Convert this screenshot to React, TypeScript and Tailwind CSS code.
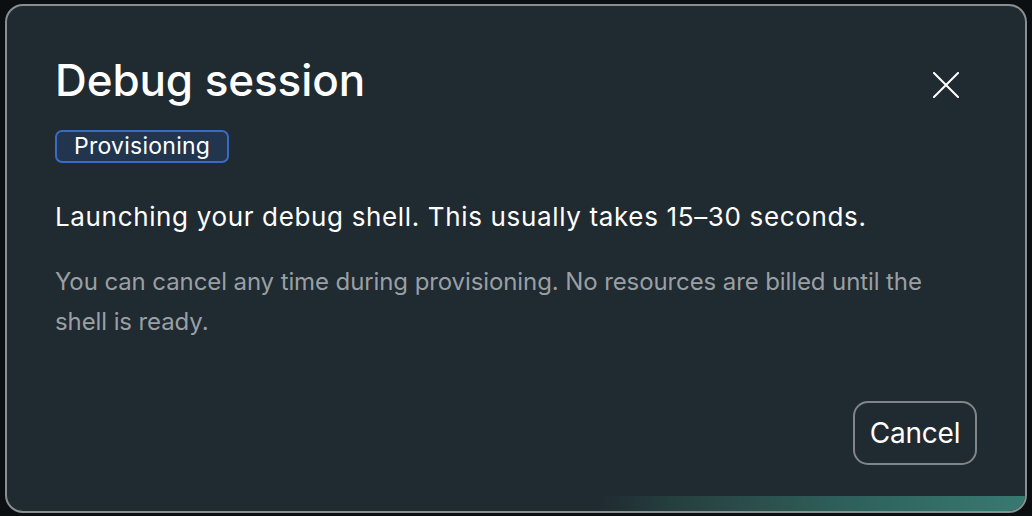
import React from 'react';

const CloseIcon = () => (
  <svg width="26" height="26" viewBox="0 0 26 26" fill="none" stroke="currentColor" strokeWidth="2" strokeLinecap="square">
    <path d="M1 1 L25 25 M25 1 L1 25" />
  </svg>
);

const App: React.FC = () => {
  return (
    <div
      className="w-full h-[516px] bg-[#0b0f11] pt-[4px] pl-[5px] pr-[5px] pb-[3px]"
      style={{ fontFamily: 'Inter, "Noto Sans", sans-serif' }}
    >
      {/* Dialog */}
      <div className="h-full w-full flex flex-col rounded-[18px] border-2 border-[#8a8e91] bg-[#1f2a31] overflow-hidden">
        <div className="flex-1 flex flex-col px-12 pt-[52px] pb-[31px]">
          <div className="flex items-start justify-between">
            <h2 className="text-[44px] leading-[56px] font-medium text-white tracking-[-0.1px] -mt-[6px]">
              Debug session
            </h2>
            <button className="mr-[13px] mt-[9px] w-[36px] h-[36px] flex items-center justify-center text-white">
              <CloseIcon />
            </button>
          </div>

          <div className="mt-[22px] flex">
            <span className="flex items-center h-[33px] px-[17px] rounded-[7px] border-2 border-[#3a6bc0] bg-[#21354f] text-white text-[23px] tracking-[0.25px] leading-none">
              Provisioning
            </span>
          </div>

          <p className="mt-[38px] text-white text-[26px] tracking-[0.65px] leading-[32px]">
            Launching your debug shell. This usually takes 15–30 seconds.
          </p>

          <p className="mt-[29px] text-[#9a9fa3] text-[24px] tracking-[-0.1px] leading-[40px] max-w-[900px]">
            You can cancel any time during provisioning. No resources are billed until the shell is ready.
          </p>

          <div className="mt-auto flex justify-end">
            <button className="h-[64px] w-[124px] rounded-[15px] border-2 border-[#80858a] text-white text-[28px] tracking-[-0.2px]">
              Cancel
            </button>
          </div>
        </div>

        {/* Progress strip */}
        <div className="h-[15px] w-full bg-[linear-gradient(to_right,transparent_58%,#26403f_66%,#2f5f5a_82%,#377a71_100%)]" />
      </div>
    </div>
  );
};

export default App;
